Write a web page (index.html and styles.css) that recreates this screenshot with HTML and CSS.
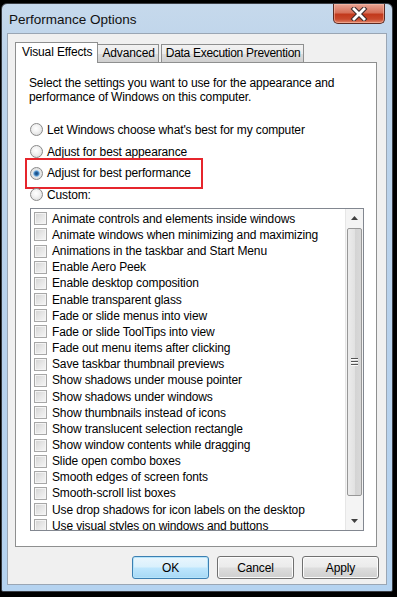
FILE: index.html
```html
<!DOCTYPE html>
<html>
<head>
<meta charset="utf-8">
<link rel="stylesheet" href="styles.css">
</head>
<body>
<div class="screen">
  <div class="window">
    <div class="titlebar">
      <span class="title">Performance Options</span>
      <div class="close">
        <svg width="20" height="14" viewBox="0 0 20 14">
          <path d="M5 2 L15 12 M15 2 L5 12" stroke="#3a2a2a" stroke-width="4.8" stroke-linecap="square" fill="none"/>
          <path d="M5 2 L15 12 M15 2 L5 12" stroke="#ffffff" stroke-width="2.8" stroke-linecap="square" fill="none"/>
        </svg>
      </div>
    </div>
    <div class="client">
      <div class="tabs">
        <div class="tab active">Visual Effects</div>
        <div class="tab">Advanced</div>
        <div class="tab">Data Execution Prevention</div>
      </div>
      <div class="panel">
        <p class="intro">Select the settings you want to use for the appearance and performance of Windows on this computer.</p>
        <div class="radios">
          <div class="radio-row"><span class="radio"></span><span>Let Windows choose what's best for my computer</span></div>
          <div class="radio-row"><span class="radio"></span><span>Adjust for best appearance</span></div>
          <div class="radio-row highlighted"><span class="radio checked"></span><span>Adjust for best performance</span></div>
          <div class="radio-row"><span class="radio"></span><span>Custom:</span></div>
        </div>
        <div class="listbox">
          <div class="items">
            <div class="item"><span class="check"></span>Animate controls and elements inside windows</div>
            <div class="item"><span class="check"></span>Animate windows when minimizing and maximizing</div>
            <div class="item"><span class="check"></span>Animations in the taskbar and Start Menu</div>
            <div class="item"><span class="check"></span>Enable Aero Peek</div>
            <div class="item"><span class="check"></span>Enable desktop composition</div>
            <div class="item"><span class="check"></span>Enable transparent glass</div>
            <div class="item"><span class="check"></span>Fade or slide menus into view</div>
            <div class="item"><span class="check"></span>Fade or slide ToolTips into view</div>
            <div class="item"><span class="check"></span>Fade out menu items after clicking</div>
            <div class="item"><span class="check"></span>Save taskbar thumbnail previews</div>
            <div class="item"><span class="check"></span>Show shadows under mouse pointer</div>
            <div class="item"><span class="check"></span>Show shadows under windows</div>
            <div class="item"><span class="check"></span>Show thumbnails instead of icons</div>
            <div class="item"><span class="check"></span>Show translucent selection rectangle</div>
            <div class="item"><span class="check"></span>Show window contents while dragging</div>
            <div class="item"><span class="check"></span>Slide open combo boxes</div>
            <div class="item"><span class="check"></span>Smooth edges of screen fonts</div>
            <div class="item"><span class="check"></span>Smooth-scroll list boxes</div>
            <div class="item"><span class="check"></span>Use drop shadows for icon labels on the desktop</div>
            <div class="item"><span class="check"></span>Use visual styles on windows and buttons</div>
          </div>
          <div class="scrollbar">
            <div class="arrow up"><svg width="7" height="4" viewBox="0 0 7 4"><path d="M0 4 L3.5 0 L7 4 Z" fill="#404040"/></svg></div>
            <div class="thumb"><span class="grip"></span><span class="grip"></span><span class="grip"></span></div>
            <div class="arrow down"><svg width="7" height="4" viewBox="0 0 7 4"><path d="M0 0 L3.5 4 L7 0 Z" fill="#404040"/></svg></div>
          </div>
        </div>
      </div>
      <div class="buttons">
        <div class="btn default">OK</div>
        <div class="btn">Cancel</div>
        <div class="btn">Apply</div>
      </div>
    </div>
  </div>
</div>
</body>
</html>
```
FILE: styles.css
```css
* { box-sizing: border-box; }
html, body { margin: 0; padding: 0; background: #000; }
body { font-family: "Liberation Sans", Arial, sans-serif; font-size: 12px; color: #000; letter-spacing: -0.13px; }
.screen { width: 397px; height: 597px; padding: 3px 4px 5px 1px; background: #000; overflow: hidden; }
.window {
  width: 392px; height: 589px;
  border: 1px solid #3b3f46;
  border-radius: 6px 6px 2px 2px;
  background: linear-gradient(180deg, #c6d9ec 0%, #bcd3ea 10%, #b7d1ec 60%, #b5d3f0 100%);
  padding: 0 5px 6px 5px;
  display: flex; flex-direction: column;
}
.titlebar { height: 29px; display: flex; justify-content: space-between; align-items: flex-start; }
.title { font-size: 13.5px; color: #111; padding: 8px 0 0 2px; letter-spacing: 0; }
.close {
  width: 52px; height: 20px; margin: 0 2px 0 0;
  border: 1px solid #5b2a22; border-top: none;
  border-radius: 0 0 5px 5px;
  background: linear-gradient(180deg, #e9a595 0%, #d7715a 45%, #c2391c 55%, #c9492c 80%, #e0866a 100%);
  display: flex; align-items: center; justify-content: center;
  box-shadow: inset 0 0 0 1px rgba(255,200,180,0.5);
}
.client {
  flex: 1;
  background: #f0f0f0;
  border: 1px solid #9aa6b4;
  padding: 8px 9px 0 7px;
  display: flex; flex-direction: column;
}
.tabs { display: flex; align-items: flex-end; height: 20px; position: relative; z-index: 1; }
.tab {
  height: 18px; padding: 0 4px;
  border: 1px solid #8e8f8f; border-bottom: none; border-left: none;
  background: linear-gradient(180deg, #f2f2f2 0%, #ebebeb 50%, #dddddd 51%, #cfcfcf 100%);
  line-height: 17px; white-space: nowrap;
}
.tab.active {
  height: 21px; margin-bottom: -1px;
  background: #fff; border-left: 1px solid #8e8f8f;
  padding: 0 5px 0 6px; line-height: 19px;
}
.tab:nth-child(2) { padding: 0 3px 0 4px; }
.tab:nth-child(3) { padding: 0 3px 0 4px; margin-left: 2px; border-left: 1px solid #8e8f8f; letter-spacing: -0.3px; }
.panel {
  height: 485px;
  background: #fff;
  border: 1px solid #8e8f8f;
  padding: 13px 12px 15px 13px;
  display: flex; flex-direction: column;
}
.intro { margin: 0; line-height: 14px; padding-right: 10px; }
.radios { margin-top: 15px; display: flex; flex-direction: column; }
.radio-row { height: 21.7px; display: flex; align-items: center; gap: 4px; position: relative; padding-left: 1px; }
.radio {
  width: 13px; height: 13px; border-radius: 50%;
  border: 1px solid #8a8a8a;
  background: radial-gradient(circle at 45% 40%, #ffffff 0%, #f2f2f2 40%, #d4d4d4 100%);
  flex: none;
}
.radio.checked {
  background: radial-gradient(circle at 50% 50%, #1d4a7a 0%, #2566a6 22%, #7eb6e4 36%, #e8e8e8 48%, #d8d8d8 100%);
}
.highlighted::after {
  content: ""; position: absolute;
  left: -4px; top: -4px; width: 174px; height: 27px;
  border: 2px solid #e6252c;
}
.listbox {
  margin-top: 2px; margin-left: 1px;
  height: 324px;
  border: 1px solid #828790;
  display: flex;
  overflow: hidden;
}
.items { flex: 1; padding: 2px 0 0 3px; overflow: hidden; }
.item { height: 16.16px; display: flex; align-items: center; gap: 5px; white-space: nowrap; }
.check {
  width: 13px; height: 13px; flex: none;
  border: 1px solid #a7a7a7;
  background: linear-gradient(135deg, #d2d2d2 0%, #e6e6e6 50%, #f6f6f6 100%);
  box-shadow: inset 0 0 0 1px #f4f4f4;
}
.scrollbar {
  width: 18px; flex: none;
  background: #f4f4f4;
  border-left: 1px solid #e6e6e6;
  display: flex; flex-direction: column;
}
.arrow { height: 18px; display: flex; align-items: center; justify-content: center; }
.thumb {
  margin: 1px 1px 0 1px; flex: 1;
  border: 1px solid #979797; border-radius: 2px;
  background: linear-gradient(90deg, #ececec 0%, #e2e2e2 50%, #d3d3d3 51%, #d8d8d8 100%);
  display: flex; flex-direction: column; align-items: center; justify-content: center; gap: 2px;
  max-height: 268px;
}
.arrow.down { margin-top: auto; }
.grip { width: 7px; height: 1px; background: #555; box-shadow: 0 1px 0 #fafafa; }
.buttons { display: flex; justify-content: flex-end; gap: 8px; padding: 9px 0 0 0; margin-right: -2px; }
.btn {
  width: 77px; height: 23px;
  border: 1px solid #707070; border-radius: 3px;
  background: linear-gradient(180deg, #f2f2f2 0%, #ebebeb 48%, #dddddd 52%, #cfcfcf 100%);
  box-shadow: inset 0 0 0 1px #fcfcfc;
  display: flex; align-items: center; justify-content: center;
}
.btn.default {
  border-color: #3c7fb1;
  background: linear-gradient(180deg, #eaf6fd 0%, #d9f0fc 48%, #bee6fd 52%, #a7d9f5 100%);
  box-shadow: inset 0 0 0 1px #b5e4fb;
}
```
